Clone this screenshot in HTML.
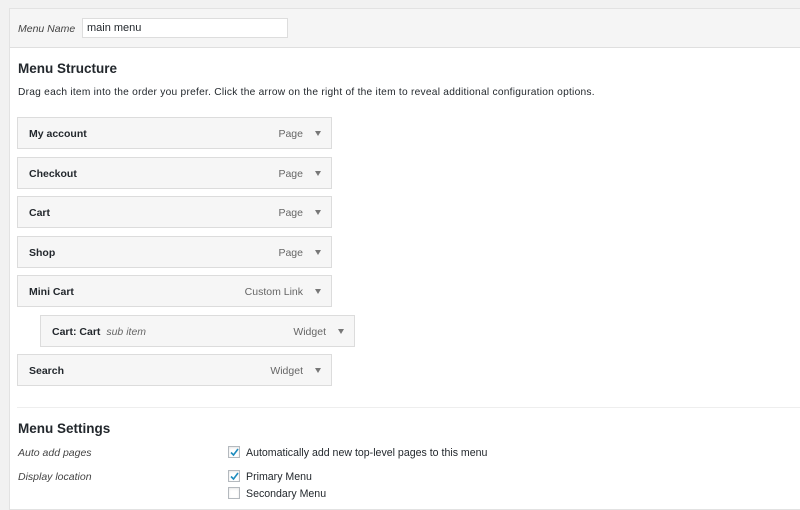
<!DOCTYPE html>
<html><head><style>
body{margin:0;width:800px;height:500px;background:#f1f1f1;font-family:"Liberation Sans",sans-serif;color:#23282d;overflow:hidden;position:relative}
.panel{position:absolute;left:9px;top:8px;width:800px;height:500px;background:#fff;border:1px solid #e2e2e2}
.hdr{position:absolute;left:0;top:0;right:0;height:38px;background:#f5f5f5;border-bottom:1px solid #dfdfdf}
.abs{position:absolute}
.item{position:absolute;width:313px;height:30px;background:#f6f6f6;border:1px solid #dcdcdc;font-size:10.5px}
.item b{position:absolute;left:11px;top:10px;font-weight:bold;color:#23282d}
.item .t{position:absolute;right:28px;top:10px;color:#666}
.item .a{position:absolute;right:10px;top:13px;width:0;height:0;border-left:3px solid transparent;border-right:3px solid transparent;border-top:5px solid #777}
.cb{position:absolute;width:10px;height:10px;border:1px solid #b4b9be;background:#fff;box-shadow:inset 0 1px 2px rgba(0,0,0,.1)}
.cb svg{position:absolute;left:0;top:0}
.lab{position:absolute;font-size:10.5px;font-style:italic;color:#444}
.txt{position:absolute;font-size:10.6px;color:#23282d}
</style></head><body>
<div class="panel">
<div class="hdr"></div>
</div>
<div class="lab" style="left:18px;top:23px">Menu Name</div>
<div class="abs" style="left:82px;top:18px;border:1px solid #ddd;background:#fff;font-size:11px;line-height:18px;padding-left:4px;box-sizing:border-box;width:206px;height:20px">main menu</div>
<div class="abs" style="left:18px;top:61px;font-size:13.5px;font-weight:bold">Menu Structure</div>
<div class="txt" style="left:18px;top:87px;font-size:10.2px;letter-spacing:0.25px">Drag each item into the order you prefer. Click the arrow on the right of the item to reveal additional configuration options.</div>
<div class="item" style="left:17px;top:117px"><b>My account</b><span class="t">Page</span><span class="a"></span></div>
<div class="item" style="left:17px;top:157px"><b>Checkout</b><span class="t">Page</span><span class="a"></span></div>
<div class="item" style="left:17px;top:196px"><b>Cart</b><span class="t">Page</span><span class="a"></span></div>
<div class="item" style="left:17px;top:236px"><b>Shop</b><span class="t">Page</span><span class="a"></span></div>
<div class="item" style="left:17px;top:275px"><b>Mini Cart</b><span class="t">Custom Link</span><span class="a"></span></div>
<div class="item" style="left:40px;top:315px"><b>Cart: Cart <i style="font-weight:normal;color:#666;margin-left:3px">sub item</i></b><span class="t">Widget</span><span class="a"></span></div>
<div class="item" style="left:17px;top:354px"><b>Search</b><span class="t">Widget</span><span class="a"></span></div>
<div class="abs" style="left:17px;top:407px;width:783px;height:1px;background:#eee"></div>
<div class="abs" style="left:18px;top:421px;font-size:13.5px;font-weight:bold">Menu Settings</div>
<div class="lab" style="left:18px;top:447px">Auto add pages</div>
<div class="lab" style="left:18px;top:471px">Display location</div>
<div class="cb" style="left:228px;top:446px"><svg width="11" height="11" viewBox="0 0 11 11"><path d="M2 5.5L4.5 8L9 2" stroke="#1e8cbe" stroke-width="1.6" fill="none"/></svg></div>
<div class="txt" style="left:246px;top:447px">Automatically add new top-level pages to this menu</div>
<div class="cb" style="left:228px;top:470px"><svg width="11" height="11" viewBox="0 0 11 11"><path d="M2 5.5L4.5 8L9 2" stroke="#1e8cbe" stroke-width="1.6" fill="none"/></svg></div>
<div class="txt" style="left:246px;top:471px">Primary Menu</div>
<div class="cb" style="left:228px;top:487px"></div>
<div class="txt" style="left:246px;top:488px">Secondary Menu</div>
</body></html>
